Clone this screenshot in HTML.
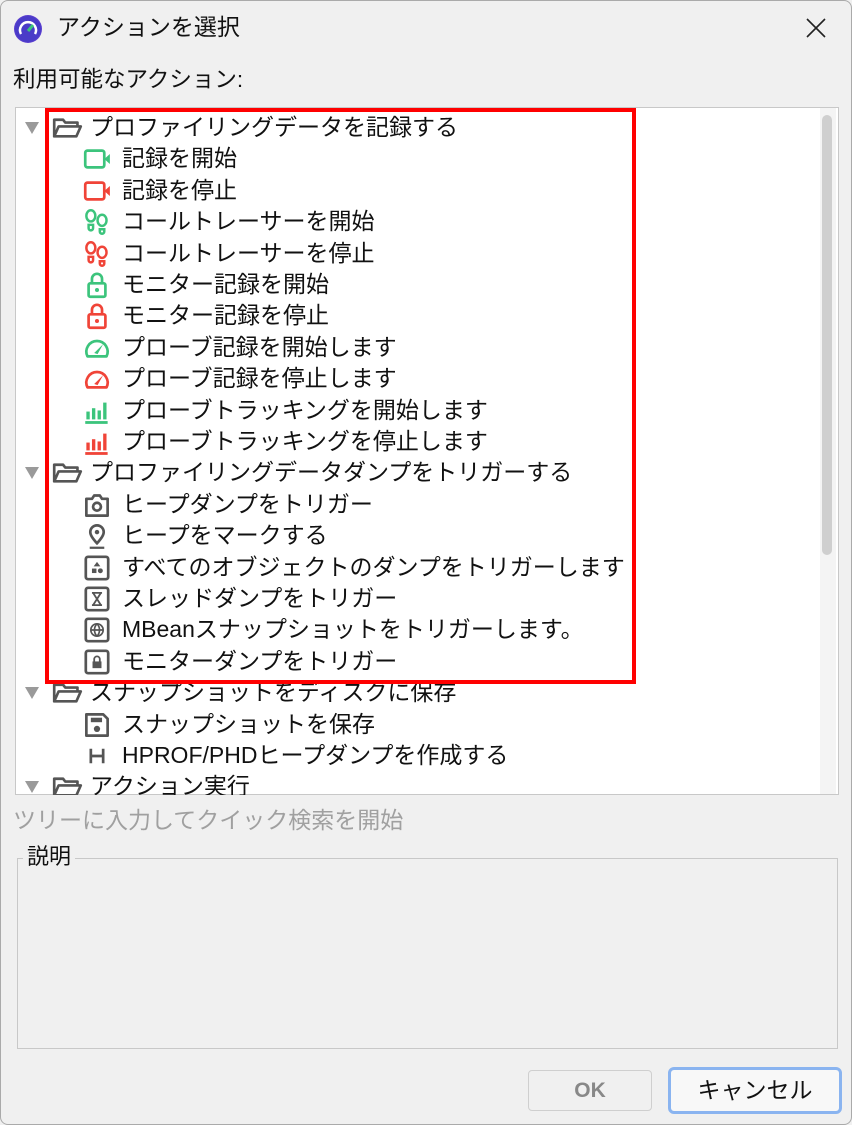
<!DOCTYPE html>
<html><head><meta charset="utf-8"><style>
*{margin:0;padding:0;box-sizing:border-box}
html,body{width:852px;height:1125px;overflow:hidden}
body{background:#f0f0f0;font-family:"Liberation Sans","Noto Sans CJK JP",sans-serif;color:#111;position:relative}
.win{position:absolute;left:0;top:0;width:852px;height:1125px;border:1px solid #aaa;border-radius:8px;background:#f0f0f0}
.t{position:absolute;font-size:23px;line-height:31px;white-space:nowrap}
.ic{position:absolute}
.tree{position:absolute;left:14px;top:106px;width:824px;height:688px;border:1px solid #c8c8c8;background:#fff;overflow:hidden}
.red{position:absolute;left:44px;top:107px;width:591px;height:576px;border:4px solid #ff0000}
.tri{position:absolute;width:0;height:0;border-left:7px solid transparent;border-right:7px solid transparent;border-top:12px solid #9a9a9a}
</style></head><body><div class="win">
<svg class="ic" style="left:12px;top:13px" width="30" height="30" viewBox="0 0 30 30"><circle cx="15" cy="15" r="14" fill="#5b3fd0"/><circle cx="15" cy="15" r="13" fill="#4a3bc8"/><path d="M8 20a8 8 0 1 1 14 0" fill="none" stroke="#fff" stroke-width="2.5"/><path d="M15 17l5-6" stroke="#3cc47c" stroke-width="3"/></svg>
<div class="t" style="left:56px;top:11px;font-size:23px">アクションを選択</div>
<svg class="ic" style="left:804px;top:16px" width="22" height="22" viewBox="0 0 22 22"><path d="M2 2L20 20M20 2L2 20" stroke="#222" stroke-width="1.6"/></svg>
<div class="t" style="left:12px;top:63px;font-size:22.5px">利用可能なアクション:</div>
<div class="tree">
<div style="position:absolute;right:2px;top:0;width:16px;height:686px;background:#f4f4f4"></div>
<div style="position:absolute;left:806px;top:7px;width:10px;height:440px;background:#cfcfcf;border-radius:5px"></div>
</div>
<div id="rows"></div>
<div class="red"></div>
<div class="t" style="left:12px;top:804px;color:#a0a0a0">ツリーに入力してクイック検索を開始</div>
<div style="position:absolute;left:16px;top:857px;width:821px;height:191px;border:1px solid #c8c8c8"></div>
<div class="t" style="left:22px;top:841px;background:#f0f0f0;padding:0 4px 0 4px;line-height:30px;font-size:22px">説明</div>
<div style="position:absolute;left:527px;top:1069px;width:124px;height:41px;border:1px solid #cfcfcf;border-radius:4px;background:#f0f0f0;font-size:21px;font-weight:bold;color:#888;text-align:center;line-height:39px">OK</div>
<div style="position:absolute;left:667px;top:1066px;width:174px;height:47px;border:3px solid #8ab4f0;border-radius:6px;background:#f8f8f8;text-align:center;line-height:41px;font-size:23px">キャンセル</div>
</div>
<script>
var G="#3cc47c",R="#f04438",K="#555";
function vid(c){return '<rect x="2" y="5" width="17" height="15" rx="2" fill="none" stroke="'+c+'" stroke-width="2.4"/><path d="M19 12.5L24 8V17Z" fill="'+c+'"/>'}
function feet(c){return '<g fill="none" stroke="'+c+'" stroke-width="2.2"><ellipse cx="7" cy="7" rx="4" ry="5"/><path d="M5 15h4v3a2 2 0 0 1-4 0z"/><ellipse cx="17" cy="11" rx="4" ry="5"/><path d="M15 19h4v2a2 2 0 0 1-4 0z"/></g>'}
function lock(c){return '<g fill="none" stroke="'+c+'" stroke-width="2.4"><path d="M8 11V7a4.5 4.5 0 0 1 9 0v4"/><rect x="5" y="11" width="15" height="12" rx="1.5"/></g><circle cx="12.5" cy="17" r="1.8" fill="'+c+'"/>'}
function gauge(c){return '<g fill="none" stroke="'+c+'" stroke-width="2.4"><path d="M4 20a9.5 9.5 0 1 1 17 0z" stroke-linejoin="round"/></g><path d="M10 17l8-8-5 9z" fill="'+c+'"/>'}
function bars(c){return '<g fill="'+c+'"><rect x="3" y="13" width="3" height="7"/><rect x="8" y="10" width="3" height="10"/><rect x="13" y="12" width="3" height="8"/><rect x="18" y="5" width="3" height="15"/><rect x="2" y="21.5" width="20" height="2.5"/></g>'}
function box(inner){return '<rect x="2.5" y="2.5" width="20" height="20" rx="2" fill="none" stroke="'+K+'" stroke-width="2.4"/>'+inner}
var cam='<g fill="none" stroke="'+K+'" stroke-width="2.4"><path d="M3 7h5l2-3h5l2 3h5v15H3z" stroke-linejoin="round"/><circle cx="12.5" cy="14" r="3.5"/></g>';
var pin='<g fill="none" stroke="'+K+'" stroke-width="2.4"><path d="M12.5 19s-6-6-6-10a6 6 0 0 1 12 0c0 4-6 10-6 10z"/></g><circle cx="12.5" cy="9" r="2" fill="'+K+'"/><rect x="6" y="22" width="13" height="2" fill="'+K+'"/>';
var shapes=box('<path d="M12.5 7l3 4h-6z" fill="'+K+'"/><rect x="8" y="13" width="4" height="4" fill="'+K+'"/><circle cx="15.5" cy="15" r="2.2" fill="'+K+'"/>');
var hour=box('<path d="M8 7h9M8 18h9M9 7l7 11M16 7l-7 11" stroke="'+K+'" stroke-width="1.6" fill="none"/>');
var globe=box('<g fill="none" stroke="'+K+'" stroke-width="1.5"><circle cx="12.5" cy="12.5" r="5.5"/><path d="M7 12.5h11M12.5 7c-3 3-3 8 0 11M12.5 7c3 3 3 8 0 11"/></g>');
var mlock=box('<path d="M10 12v-2a2.5 2.5 0 0 1 5 0v2" fill="none" stroke="'+K+'" stroke-width="1.6"/><rect x="8.5" y="12" width="8" height="6" fill="'+K+'"/>');
var save='<g fill="none" stroke="'+K+'" stroke-width="2.4"><path d="M3 3h15l4 4v15H3z" stroke-linejoin="round"/></g><rect x="7" y="6" width="10" height="4" fill="'+K+'"/><circle cx="12.5" cy="16" r="2.8" fill="'+K+'"/>';
var H='<path d="M7 6v13M18 6v13M7 12.5h11" stroke="'+K+'" stroke-width="2.4"/>';
var folder='<path d="M2 20V5h8l2 2.5h11V11" fill="none" stroke="#555" stroke-width="2.4" stroke-linejoin="round"/><path d="M2 20l4-9h20l-4 9z" fill="none" stroke="#555" stroke-width="2.4" stroke-linejoin="round"/>';
var rows=[[0,"プロファイリングデータを記録する"],[1,"記録を開始",vid(G)],[1,"記録を停止",vid(R)],[1,"コールトレーサーを開始",feet(G)],[1,"コールトレーサーを停止",feet(R)],[1,"モニター記録を開始",lock(G)],[1,"モニター記録を停止",lock(R)],[1,"プローブ記録を開始します",gauge(G)],[1,"プローブ記録を停止します",gauge(R)],[1,"プローブトラッキングを開始します",bars(G)],[1,"プローブトラッキングを停止します",bars(R)],
[0,"プロファイリングデータダンプをトリガーする"],[1,"ヒープダンプをトリガー",cam],[1,"ヒープをマークする",pin],[1,"すべてのオブジェクトのダンプをトリガーします",shapes],[1,"スレッドダンプをトリガー",hour],[1,"MBeanスナップショットをトリガーします。",globe],[1,"モニターダンプをトリガー",mlock],
[0,"スナップショットをディスクに保存"],[1,"スナップショットを保存",save],[1,"HPROF/PHDヒープダンプを作成する",H],[0,"アクション実行"]];
var h="";
rows.forEach(function(r,i){var c=127+i*31.4;
if(r[0]==0){h+='<div class="tri" style="left:24px;top:'+(c-6)+'px"></div><svg class="ic" style="left:51px;top:'+(c-14)+'px" width="31" height="27" viewBox="0 0 28 24">'+folder+'</svg><div class="t" style="left:89px;top:'+(c-16)+'px">'+r[1]+'</div>';}
else{h+='<svg class="ic" style="left:82px;top:'+(c-14)+'px" width="28" height="28" viewBox="0 0 25 25">'+r[2]+'</svg><div class="t" style="left:121px;top:'+(c-16)+'px">'+r[1]+'</div>';}
});
var d=document.getElementById("rows");d.innerHTML=h;d.style.cssText="position:absolute;left:0;top:0;width:820px;height:794px;overflow:hidden";
</script>
</body></html>
